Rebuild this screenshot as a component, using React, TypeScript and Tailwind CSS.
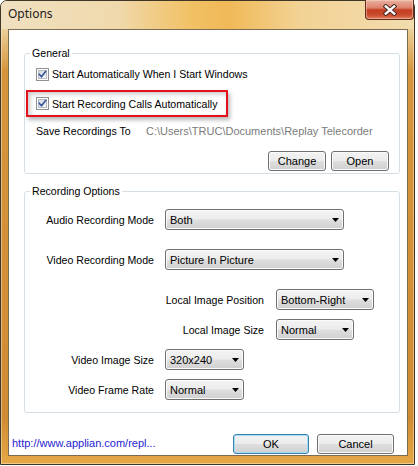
import React from "react";

const FONT = "font-['Liberation_Sans',Arial,sans-serif]";
const BTN_BG =
  "bg-[linear-gradient(to_bottom,#f3f3f3_0%,#ececec_48%,#dedede_52%,#d0d0d0_100%)]";
const TXT = "text-[10.6px] leading-[14px]";

function Check() {
  return (
    <span className="relative flex h-[13px] w-[13px] shrink-0 border border-[#8e8f8f] bg-white p-[1px]">
      <span className="h-full w-full border border-[#b7bcc2] bg-[linear-gradient(135deg,#d4d8dd,#f8f8f8)]" />
      <svg className="absolute left-0 top-0" width="11" height="11" viewBox="0 0 11 11">
        <path d="M2.2 5.2 L4.5 7.8 L8.8 2.3" fill="none" stroke="#3a56a0" strokeWidth="1.7" strokeLinecap="round" strokeLinejoin="round" />
      </svg>
    </span>
  );
}

function Btn({ children, cls, primary }: { children: React.ReactNode; cls: string; primary?: boolean }) {
  return (
    <div
      className={`flex h-[20px] items-center justify-center rounded-[3px] border text-[11px] leading-[14px] text-black ${BTN_BG} ${
        primary
          ? "border-[#3c7fb1] shadow-[inset_0_0_0_1px_#a6dcf6]"
          : "border-[#707070] shadow-[inset_0_0_0_1px_#fbfbfb]"
      } ${cls}`}
    >
      {children}
    </div>
  );
}

function Combo({ value, cls }: { value: string; cls: string }) {
  return (
    <div
      className={`flex h-[21px] shrink-0 items-center justify-between rounded-[3px] border border-[#707070] pl-[4px] pr-[4px] ${TXT} text-black shadow-[inset_0_0_0_1px_#fbfbfb] ${BTN_BG} ${cls}`}
    >
      <span className="text-[11px]">{value}</span>
      <svg width="7" height="4" viewBox="0 0 7 4" className="mt-[1px]">
        <path d="M0 0H7L3.5 4Z" fill="#000" />
      </svg>
    </div>
  );
}

function Row({ label, value, labelW, selW, gap, mt }: { label: string; value: string; labelW: string; selW: string; gap: string; mt: string }) {
  return (
    <div className={`flex items-center ${mt}`}>
      <div className={`${labelW} text-right ${TXT} text-black`}>{label}</div>
      <div className={gap} />
      <Combo value={value} cls={selW} />
    </div>
  );
}

export default function App() {
  return (
    <div className={`h-[466px] w-[418px] bg-white ${FONT}`}>
      <div className="flex h-[465px] w-[415px] flex-col rounded-t-[7px] border border-[#3f3628] bg-[linear-gradient(to_bottom,#f0dfbd_0px,#ecd09a_28px,#d6953c_70px,#d08c33_90%,#e6a846_100%)] shadow-[inset_0_0_0_1px_rgba(255,240,210,0.45)]">
        {/* title bar */}
        <div className="flex h-[28px] items-start justify-between rounded-t-[6px] bg-[linear-gradient(to_right,#efe0c0_0%,#f0d9ac_28%,#f1c164_46%,#f0b957_55%,#f2d294_72%,#f2dcae_100%)]">
          <span className="pl-[7px] pt-[5px] font-['Noto_Sans',Arial,sans-serif] text-[12px] leading-[16px] text-[#1b1b1b]">
            Options
          </span>
          <div className="-mt-[1px] flex h-[20px] w-[49px] items-center justify-center rounded-b-[4px] border border-t-0 border-[#5e2a1e] bg-[linear-gradient(to_bottom,#eab3a2_0%,#dc8069_42%,#c53f22_52%,#c94a2c_78%,#e2805c_100%)] shadow-[inset_0_0_0_1px_rgba(255,220,200,0.45)]">
            <svg width="14" height="12" viewBox="-7 -6 14 12">
              <path d="M-4.2 -3.6 L4.2 3.6 M4.2 -3.6 L-4.2 3.6" stroke="#4a2b25" strokeWidth="4.4" strokeLinecap="square" />
              <path d="M-4.2 -3.6 L4.2 3.6 M4.2 -3.6 L-4.2 3.6" stroke="#ffffff" strokeWidth="2.4" strokeLinecap="square" />
            </svg>
          </div>
        </div>

        {/* client area */}
        <div className="ml-[7px] mr-[6px] flex h-[427px] flex-col border border-[#7d6c52] bg-white">
          <div className="flex flex-col pl-[15px] pr-[7px] pt-[16px]">
            {/* General */}
            <fieldset className="rounded-[3px] border border-[#d5dfe5] pb-[2px]">
              <legend className={`ml-[5px] px-[2px] ${TXT} text-black`}>General</legend>
              <div className={`mt-[6px] flex h-[16px] items-center gap-[3px] pl-[11px] ${TXT} text-black`}>
                <Check />
                <span>Start Automatically When I Start Windows</span>
              </div>
              <div className={`ml-[1px] mt-[8px] flex h-[27px] w-[202px] items-center gap-[3px] border-2 border-[#e5101c] pl-[8px] ${TXT} text-black shadow-[2px_3px_4px_rgba(0,0,0,0.28),inset_2px_2px_5px_rgba(0,0,0,0.22)]`}>
                <Check />
                <span>Start Recording Calls Automatically</span>
              </div>
              <div className={`mt-[7px] flex h-[14px] items-center pl-[11px] ${TXT}`}>
                <span className="w-[110px] text-black">Save Recordings To</span>
                <span className="text-[11px] text-[#7b7b7b]">C:\Users\TRUC\Documents\Replay Telecorder</span>
              </div>
              <div className="mt-[13px] flex justify-end gap-[5px] pr-[10px]">
                <Btn cls="w-[58px]">Change</Btn>
                <Btn cls="w-[58px]">Open</Btn>
              </div>
            </fieldset>

            {/* Recording Options */}
            <fieldset className="mt-[10px] rounded-[3px] border border-[#d5dfe5] pb-[12px]">
              <legend className={`ml-[5px] px-[2px] ${TXT} text-black`}>Recording Options</legend>
              <Row label="Audio Recording Mode" value="Both" labelW="w-[129px]" selW="w-[179px]" gap="w-[11px]" mt="mt-[11px]" />
              <Row label="Video Recording Mode" value="Picture In Picture" labelW="w-[129px]" selW="w-[179px]" gap="w-[11px]" mt="mt-[19px]" />
              <Row label="Local Image Position" value="Bottom-Right" labelW="w-[239px]" selW="w-[98px]" gap="w-[12px]" mt="mt-[19px]" />
              <Row label="Local Image Size" value="Normal" labelW="w-[239px]" selW="w-[78px]" gap="w-[12px]" mt="mt-[9px]" />
              <Row label="Video Image Size" value="320x240" labelW="w-[129px]" selW="w-[79px]" gap="w-[11px]" mt="mt-[9px]" />
              <Row label="Video Frame Rate" value="Normal" labelW="w-[129px]" selW="w-[79px]" gap="w-[11px]" mt="mt-[9px]" />
            </fieldset>
          </div>

          {/* footer */}
          <div className="mt-[21px] flex h-[20px] items-center justify-between pl-[3px] pr-[13px]">
            <span className="-mt-[2px] text-[11px] leading-[14px] text-[#1f22d4]">http://www.applian.com/repl...</span>
            <div className="flex gap-[8px]">
              <Btn cls="w-[76px]" primary>
                OK
              </Btn>
              <Btn cls="w-[77px]">Cancel</Btn>
            </div>
          </div>
        </div>
      </div>
    </div>
  );
}
